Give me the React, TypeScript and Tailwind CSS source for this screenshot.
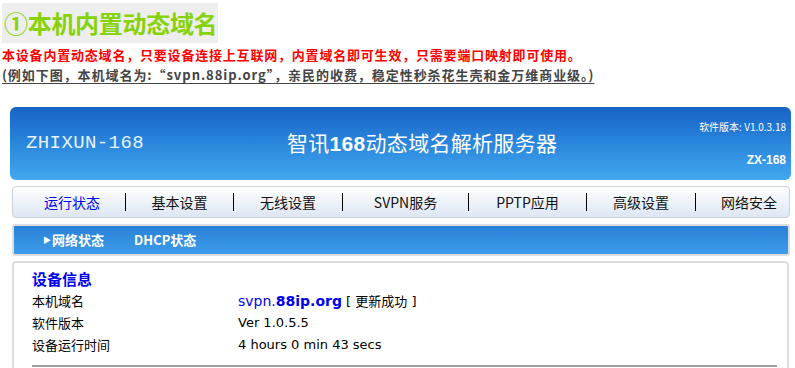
import React from "react";

const cjk = '"Noto Sans CJK SC", "Noto Sans", sans-serif';

export default function App() {
  const nav = [
    { t: "运行状态", w: "w-[106px]" },
    { t: "基本设置", w: "w-[107px]" },
    { t: "无线设置", w: "w-[108px]" },
    { t: "SVPN服务", w: "w-[125px]" },
    { t: "PPTP应用", w: "w-[117px]" },
    { t: "高级设置", w: "w-[108px]" },
    { t: "网络安全", w: "w-[106px]" },
  ];
  return (
    <div className="w-[795px] h-[368px] overflow-hidden bg-white relative" style={{ fontFamily: cjk }}>
      {/* Title */}
      <div className="pl-[2px] pt-[3px]">
        <div className="w-[216px] h-[40px] bg-[#eeeeee] flex items-center pl-[2px]">
          <span className="whitespace-nowrap text-[24px] font-bold text-[#88d20a] leading-none tracking-[-0.3px]">①本机内置动态域名</span>
        </div>
      </div>
      <div className="pl-[2px] mt-[2px] whitespace-nowrap text-[13px] font-bold text-[#ff0000] leading-[20px] tracking-[0.8px]">
        本设备内置动态域名，只要设备连接上互联网，内置域名即可生效，只需要端口映射即可使用。
      </div>
      <div className="pl-[2px] whitespace-nowrap text-[13px] font-bold text-[#444] leading-[20px] tracking-[0.95px]">
        <span className="underline underline-offset-[3px]">(例如下图，本机域名为:“svpn.88ip.org”，亲民的收费，稳定性秒杀花生壳和金万维商业级。)</span>
      </div>

      {/* Header */}
      <div className="ml-[10px] mr-[4px] mt-[22px] h-[73px] rounded-[6px] bg-gradient-to-b from-[#1863c6] via-[#2a86dc] to-[#43a8ef] relative flex items-center">
        <div className="absolute left-[16px] top-[22px] text-[19px] tracking-[0.4px] text-[#e6f2ff]" style={{ fontFamily: '"Liberation Mono", monospace' }}>ZHIXUN-168</div>
        <div className="absolute left-[277px] top-[20px] whitespace-nowrap text-[21px] text-white leading-[30px] tracking-[0.3px]">
          智讯<span className="font-bold" style={{ fontFamily: '"Liberation Sans", sans-serif' }}>168</span>动态域名解析服务器
        </div>
        <div className="absolute right-[5px] top-[12px] text-[10px] text-white">软件版本: V1.0.3.18</div>
        <div className="absolute right-[5px] top-[44px] text-[12px] font-bold text-white" style={{ fontFamily: '"Liberation Sans", sans-serif' }}>ZX-168</div>
      </div>

      {/* Nav */}
      <div className="ml-[12px] mr-[5px] mt-[6px] h-[32px] overflow-hidden rounded-[4px] border border-[#c9d1dd] bg-gradient-to-b from-white to-[#dde6f3] flex items-center text-[14px] text-[#111]">
        <div className="flex items-center pl-[6px]">
          {nav.map((n, i) => (
            <React.Fragment key={n.t}>
              {i > 0 && <div className="w-px h-[18px] bg-black shrink-0" />}
              <div className={`${n.w} shrink-0 text-center whitespace-nowrap ${i === 0 ? "text-[#0000ee]" : ""}`}>{n.t}</div>
            </React.Fragment>
          ))}
        </div>
      </div>

      {/* Sub nav */}
      <div className="ml-[12px] mr-[5px] mt-[6px] h-[32px] rounded-[3px] border-2 border-[#dddddd] bg-gradient-to-b from-[#2a80d8] to-[#3c9de9] flex items-center text-[13px] font-bold text-white">
        <span className="ml-[29px] text-[8px] mr-[1px]">▶</span>
        <span>网络状态</span>
        <span className="ml-[30px]">DHCP状态</span>
      </div>

      {/* Content */}
      <div className="ml-[12px] mr-[6px] mt-[5px] h-[120px] rounded-t-[4px] border-2 border-[#dddddd] pl-[18px] pt-[5px]">
        <div className="text-[15px] font-bold text-[#0000ee] leading-[22px]">设备信息</div>
        <div className="text-[13px] text-black">
          <div className="flex h-[22px] items-center">
            <div className="w-[206px]">本机域名</div>
            <div style={{ fontFamily: '"DejaVu Sans", sans-serif' }}>
              <span className="text-[#0000ee] text-[14px]">svpn.<span className="font-bold">88ip.org</span></span>
              <span className="text-[13px]"> [ <span style={{ fontFamily: cjk }}>更新成功</span> ]</span>
            </div>
          </div>
          <div className="flex h-[22px] items-center">
            <div className="w-[206px]">软件版本</div>
            <div style={{ fontFamily: '"DejaVu Sans", sans-serif' }}>Ver 1.0.5.5</div>
          </div>
          <div className="flex h-[22px] items-center">
            <div className="w-[206px]">设备运行时间</div>
            <div style={{ fontFamily: '"DejaVu Sans", sans-serif' }}>4 hours 0 min 43 secs</div>
          </div>
          <div className="mt-[9px] mr-[10px] h-[2px] bg-[#a0a0a0]" />
        </div>
      </div>
    </div>
  );
}
